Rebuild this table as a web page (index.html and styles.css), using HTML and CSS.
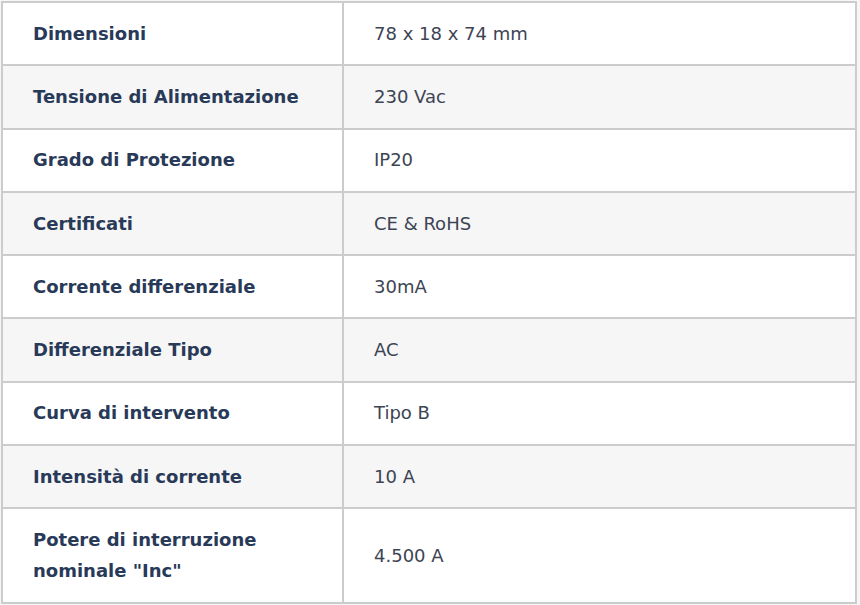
FILE: index.html
```html
<!DOCTYPE html>
<html lang="it">
<head>
<meta charset="utf-8">
<title>Specifiche</title>
<link rel="stylesheet" href="styles.css">
</head>
<body>
<table class="specs">
  <colgroup><col class="c-label"><col class="c-value"></colgroup>
  <tbody>
    <tr><th>Dimensioni</th><td>78 x 18 x 74 mm</td></tr>
    <tr><th>Tensione di Alimentazione</th><td>230 Vac</td></tr>
    <tr><th>Grado di Protezione</th><td>IP20</td></tr>
    <tr><th>Certificati</th><td>CE &amp; RoHS</td></tr>
    <tr><th>Corrente differenziale</th><td>30mA</td></tr>
    <tr><th>Differenziale Tipo</th><td>AC</td></tr>
    <tr><th>Curva di intervento</th><td>Tipo B</td></tr>
    <tr><th>Intensità di corrente</th><td>10 A</td></tr>
    <tr><th>Potere di interruzione nominale "Inc"</th><td>4.500 A</td></tr>
  </tbody>
</table>
</body>
</html>
```
FILE: styles.css
```css
html, body {
  margin: 0;
  padding: 0;
  background: #f6f6f6;
}
body {
  padding: 1px 0 0 1px;
}
.specs {
  width: 856px;
  border-collapse: collapse;
  font-family: "DejaVu Sans", "Liberation Sans", sans-serif;
  font-size: 18px;
  line-height: 31.5px;
  background: #ffffff;
}
.c-label { width: 341px; }
.specs th, .specs td {
  border: 2px solid #cccccc;
  padding: 14.875px 30px 14.875px 30px;
  text-align: left;
  vertical-align: middle;
}
.specs th {
  font-weight: 700;
  color: #293a59;
}
.specs td {
  font-weight: 400;
  color: #3d4454;
}
.specs tr:nth-child(even) th,
.specs tr:nth-child(even) td {
  background: #f6f6f6;
}
```
